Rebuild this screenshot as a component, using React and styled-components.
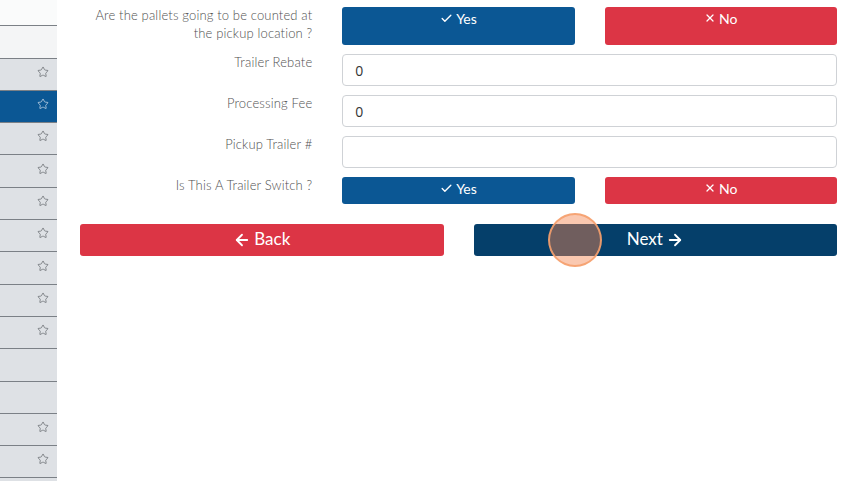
import React from "react";
import styled, { createGlobalStyle } from "styled-components";
import { Check, X, ArrowLeft, ArrowRight, Star } from "lucide-react";

const Global = createGlobalStyle`
  html, body { margin: 0; padding: 0; background: #fff; }
  body { font-family: Lato, "Open Sans", sans-serif; overflow: hidden; }
  * { box-sizing: border-box; }
`;

const Page = styled.div`
  display: flex;
  width: 860px;
  height: 481px;
  position: relative;
  overflow: hidden;
`;

const Sidebar = styled.nav`
  width: 57px;
  flex: none;
  display: flex;
  flex-direction: column;
  background: #dee1e5;
`;

const SideRow = styled.div`
  height: ${(p) => p.$h || 32.3}px;
  flex: none;
  border-bottom: 1px solid #7b8086;
  background: ${(p) =>
    p.$active ? "#0b5794" : p.$top ? "#fafbfb" : p.$light ? "#f4f5f6" : "#dee1e5"};
  color: ${(p) => (p.$active ? "#e8eef5" : "#55595e")};
  display: flex;
  align-items: center;
  justify-content: flex-end;
  padding-right: 8px;
  svg { margin-bottom: 5px; }
`;

const Main = styled.main`
  flex: 1;
  padding: 7px 8px 0;
  display: flex;
  flex-direction: column;
`;

const FormGrid = styled.div`
  display: grid;
  grid-template-columns: 1fr 2fr;
  row-gap: 9px;
`;

const Label = styled.div`
  padding-right: 15px;
  text-align: right;
  font-size: 13px;
  font-weight: 300;
  letter-spacing: 0.15px;
  line-height: 18px;
  color: #505050;
  margin-top: -1px;
`;

const Field = styled.div`
  padding: 0 15px;
  display: ${(p) => (p.$split ? "grid" : "block")};
  grid-template-columns: 1fr 1fr;
  column-gap: 30px;
`;

const Toggle = styled.button`
  border: none;
  border-radius: 3px;
  background: ${(p) => (p.$variant === "yes" ? "#0b5794" : "#dc3545")};
  color: #fff;
  font-family: Lato, "Open Sans", sans-serif;
  font-size: 14px;
  line-height: 19px;
  height: ${(p) => p.$h}px;
  padding: 2px 8px 0;
  display: flex;
  align-items: flex-start;
  justify-content: center;
  gap: 3px;
  svg { margin-top: 3px; }
`;

const Input = styled.div`
  height: 32px;
  border: 1px solid #cfd2d6;
  border-radius: 4px;
  background: #fff;
  padding: 0 12px;
  display: flex;
  align-items: center;
  font-size: 14px;
  color: #333;
  font-family: "Open Sans", Lato, sans-serif;
`;

const Actions = styled.div`
  display: grid;
  grid-template-columns: 1fr 1fr;
  margin-top: 20px;
`;

const ActionCell = styled.div`
  padding: 0 15px;
`;

const BigButton = styled.button`
  width: 100%;
  height: 32px;
  border: none;
  border-radius: 3px;
  background: ${(p) => (p.$variant === "next" ? "#053f6a" : "#dc3545")};
  color: #fff;
  font-family: Lato, "Open Sans", sans-serif;
  font-size: 17px;
  line-height: 20px;
  padding-bottom: 3px;
  display: flex;
  align-items: center;
  justify-content: center;
  gap: 3px;
  svg { margin-top: 2px; }
`;

const Tap = styled.div`
  position: absolute;
  left: 548px;
  top: 213px;
  width: 54px;
  height: 54px;
  border-radius: 50%;
  background: rgba(244, 132, 80, 0.45);
  border: 2px solid rgba(245, 160, 110, 0.9);
  pointer-events: none;
`;

const sideRows = [
  { h: 26.3, top: true },
  { h: 32.3, light: true },
  { star: true },
  { star: true, active: true },
  { star: true },
  { star: true },
  { star: true },
  { star: true },
  { star: true },
  { star: true },
  { star: true },
  {},
  {},
  { star: true },
  { star: true },
];

export default function App() {
  return (
    <>
      <Global />
      <Page>
        <Sidebar>
          {sideRows.map((r, i) => (
            <SideRow key={i} $h={r.h} $top={r.top} $light={r.light} $active={r.active}>
              {r.star && <Star size={12} strokeWidth={1.3} />}
            </SideRow>
          ))}
        </Sidebar>
        <Main>
          <FormGrid>
            <Label>
              Are the pallets going to be counted at
              <br />
              the pickup location ?
            </Label>
            <Field $split>
              <Toggle $variant="yes" $h={38}>
                <Check size={13} strokeWidth={2.5} /> Yes
              </Toggle>
              <Toggle $variant="no" $h={38}>
                <X size={12} strokeWidth={2.5} /> No
              </Toggle>
            </Field>

            <Label>Trailer Rebate</Label>
            <Field>
              <Input>0</Input>
            </Field>

            <Label>Processing Fee</Label>
            <Field>
              <Input>0</Input>
            </Field>

            <Label>Pickup Trailer #</Label>
            <Field>
              <Input />
            </Field>

            <Label>Is This A Trailer Switch ?</Label>
            <Field $split>
              <Toggle $variant="yes" $h={27}>
                <Check size={13} strokeWidth={2.5} /> Yes
              </Toggle>
              <Toggle $variant="no" $h={27}>
                <X size={12} strokeWidth={2.5} /> No
              </Toggle>
            </Field>
          </FormGrid>
          <Actions>
            <ActionCell>
              <BigButton $variant="back">
                <ArrowLeft size={18} strokeWidth={2.4} /> Back
              </BigButton>
            </ActionCell>
            <ActionCell>
              <BigButton $variant="next">
                Next <ArrowRight size={18} strokeWidth={2.4} />
              </BigButton>
            </ActionCell>
          </Actions>
        </Main>
        <Tap />
      </Page>
    </>
  );
}
